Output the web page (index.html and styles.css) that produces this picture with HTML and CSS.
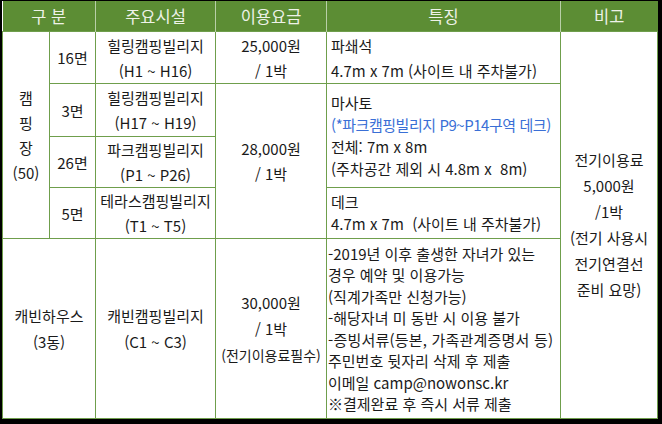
FILE: index.html
```html
<!DOCTYPE html>
<html lang="ko">
<head>
<meta charset="utf-8">
<link rel="stylesheet" href="styles.css">
</head>
<body>
<div class="frame">
<table class="price">
  <colgroup>
    <col class="c1"><col class="c2"><col class="c3"><col class="c4"><col class="c5"><col class="c6">
  </colgroup>
  <tr class="head">
    <th colspan="2">구 분</th>
    <th>주요시설</th>
    <th>이용요금</th>
    <th>특징</th>
    <th>비고</th>
  </tr>
  <tr class="r1">
    <td rowspan="4" class="vert">캠<br>핑<br>장<br>(50)</td>
    <td>16면</td>
    <td>힐링캠핑빌리지<br>(H1 ~ H16)</td>
    <td>25,000원<br>/ 1박</td>
    <td class="feat">파쇄석<br>4.7m x 7m (사이트 내 주차불가)</td>
    <td rowspan="5" class="note">전기이용료<br>5,000원<br>/1박<br>(전기 사용시<br>전기연결선<br>준비 요망)</td>
  </tr>
  <tr class="r2">
    <td>3면</td>
    <td>힐링캠핑빌리지<br>(H17 ~ H19)</td>
    <td rowspan="3">28,000원<br>/ 1박</td>
    <td rowspan="2" class="feat tight">마사토<br><span class="blue">(*파크캠핑빌리지 P9~P14구역 데크)</span><br>전체: 7m x 8m<br>(주차공간 제외 시 4.8m x&nbsp; 8m)</td>
  </tr>
  <tr class="r3">
    <td>26면</td>
    <td>파크캠핑빌리지<br>(P1 ~ P26)</td>
  </tr>
  <tr class="r4">
    <td>5면</td>
    <td>테라스캠핑빌리지<br>(T1 ~ T5)</td>
    <td class="feat tight">데크<br>4.7m x 7m&nbsp; (사이트 내 주차불가)</td>
  </tr>
  <tr class="r5">
    <td colspan="2" class="loose">캐빈하우스<br>(3동)</td>
    <td class="loose">캐빈캠핑빌리지<br>(C1 ~ C3)</td>
    <td class="loose">30,000원<br>/ 1박<br><span class="small">(전기이용료필수)</span></td>
    <td class="feat cabin">-2019년 이후 출생한 자녀가 있는<br>경우 예약 및 이용가능<br>(직계가족만 신청가능)<br>-해당자녀 미 동반 시 이용 불가<br><span class="wide">-증빙서류(등본, 가족관계증명서 등)</span><br>주민번호 뒷자리 삭제 후 제출<br>이메일 camp@nowonsc.kr<br>※결제완료 후 즉시 서류 제출</td>
  </tr>
</table>
</div>
</body>
</html>
```

FILE: styles.css
```css
html, body {
  margin: 0;
  padding: 0;
  background: #000;
}
.frame {
  width: 662px;
  height: 424px;
  box-sizing: border-box;
  padding: 1px 5px 7px 2px;
}
.price {
  width: 655px;
  height: 416px;
  border-collapse: collapse;
  table-layout: fixed;
  background: #fff;
  font-family: "Noto Sans CJK KR", "Noto Sans", sans-serif;
  font-size: 15px;
  color: #1a1a1a;
}
.c1 { width: 47px; }
.c2 { width: 46px; }
.c3 { width: 120px; }
.c4 { width: 111px; }
.c5 { width: 234px; }
.c6 { width: 97px; }
.price th {
  background: #5c8d34;
  color: #eef2e8;
  font-weight: 400;
  font-size: 16.5px;
  height: 30px;
  padding: 0;
  border: 1px solid #b9cfa8;
  border-top: none;
  border-bottom: none;
}
.price th:first-child { border-left: none; }
.price th:last-child { border-right: none; }
.price td {
  border: 1px solid #6f9e4c;
  padding: 0;
  text-align: center;
  vertical-align: middle;
  line-height: 25px;
  white-space: nowrap;
}
.r1 { height: 52px; }
.r2 { height: 53px; }
.r3 { height: 50px; }
.r4 { height: 51px; }
.r5 { height: 180px; }
.price td.feat {
  text-align: left;
  padding-left: 4px;
}
.price td.tight { line-height: 22px; }
.price td.cabin { line-height: 21.5px; padding-left: 1px; }
.price td.note { line-height: 26px; }
.price td.loose { line-height: 26px; }
.blue { color: #3a6fd6; letter-spacing: -0.45px; }
.wide { letter-spacing: 0.2px; }
.small { font-size: 14px; }
```
